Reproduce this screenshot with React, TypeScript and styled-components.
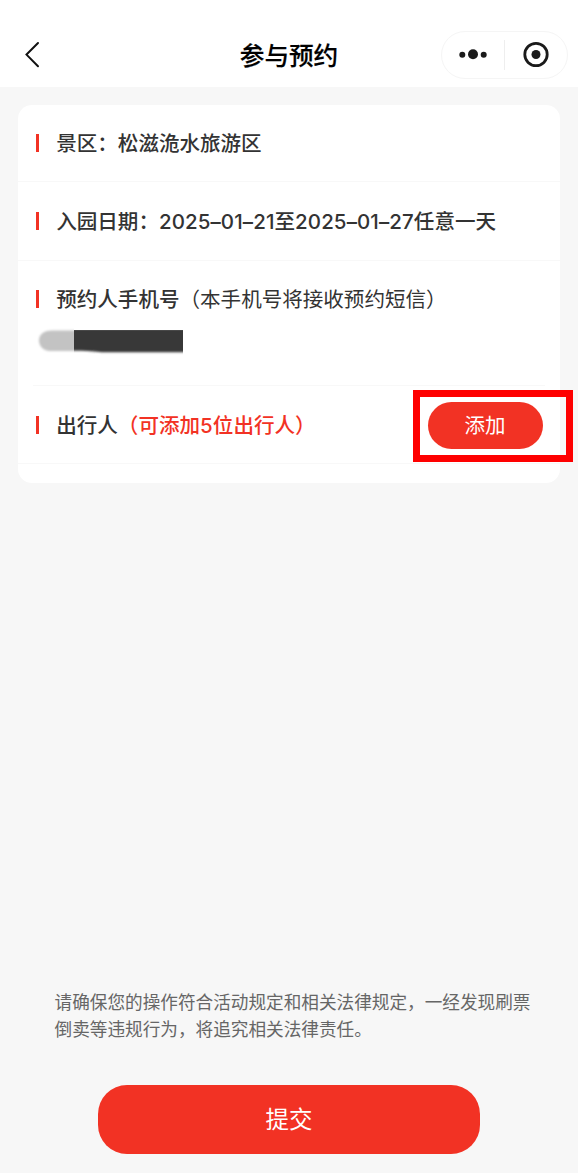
import React from "react";
import styled, { createGlobalStyle } from "styled-components";

const GlobalStyle = createGlobalStyle`
  *, *::before, *::after { box-sizing: border-box; }
  body {
    margin: 0;
    background: #f7f7f7;
    font-family: "Noto Sans CJK SC", sans-serif;
    color: #333;
  }
  button { font-family: inherit; border: 0; padding: 0; margin: 0; cursor: pointer; }
`;

const Page = styled.div`
  display: flex;
  flex-direction: column;
  width: 100%;
  height: 1173px;
  overflow: hidden;
`;

const Header = styled.header`
  display: grid;
  grid-template-columns: 1fr auto 1fr;
  align-items: center;
  height: 87px;
  padding: 22px 10px 0 14px;
  background: #fff;
`;

const BackButton = styled.button`
  display: flex;
  width: 36px;
  height: 36px;
  background: none;
`;

const Title = styled.h1`
  margin: 0 4px 2px 0;
  font-size: 24.6px;
  font-weight: 500;
  line-height: 36px;
  color: #000;
  -webkit-text-stroke: 0.2px #000;
`;

const Capsule = styled.div`
  display: flex;
  align-items: center;
  justify-self: end;
  width: 127px;
  height: 48px;
  border: 1px solid #f5f5f5;
  border-radius: 24px;
`;

const CapsuleButton = styled.button`
  display: flex;
  flex: 1;
  align-items: center;
  justify-content: center;
  height: 100%;
  background: none;
`;

const CapsuleRule = styled.span`
  width: 1px;
  height: 30px;
  background: #eee;
`;

const Card = styled.main`
  display: flex;
  flex-direction: column;
  height: 378px;
  margin: 18px 18px 0;
  border-radius: 14px;
  background: #fff;
`;

const Row = styled.section<{ $height: number; $inset?: boolean }>`
  display: flex;
  flex-direction: column;
  height: ${(p) => p.$height}px;
  padding: 0 17.5px 0 16.5px;
  background: linear-gradient(#f8f8f8, #f8f8f8) bottom center / ${(p) => (p.$inset ? "calc(100% - 30px)" : "100%")} 1px no-repeat;
`;

const RowLine = styled.div<{ $height?: number }>`
  display: flex;
  align-items: center;
  height: ${(p) => p.$height ?? 76}px;
`;

const Marker = styled.span`
  flex: none;
  width: 3.5px;
  height: 18px;
  margin: 0 17.2px 0 1px;
  background: #f23224;
`;

const Label = styled.span<{ $weight?: number; $red?: boolean }>`
  height: 30px;
  margin-top: -2px;
  font-size: 20.55px;
  line-height: 30px;
  font-weight: ${(p) => p.$weight ?? 500};
  color: ${(p) => (p.$red ? "#f23224" : "#333")};
  white-space: pre;
`;

const Digits = styled.span`
  font-family: Inter, "Noto Sans CJK SC", sans-serif;
  font-size: 20.5px;
  font-weight: 450;
  line-height: 1;
  letter-spacing: 0.1px;
`;

const MaskedPhone = styled.svg`
  display: block;
  width: 150px;
  height: 28px;
  margin: -10px 0 0 1.5px;
`;

const AddButton = styled.button`
  position: relative;
  width: 115px;
  height: 47px;
  margin-left: auto;
  border-radius: 24px;
  background: #f23224;
  color: #fff;
  font-size: 20.5px;
  line-height: 45px;
  padding-bottom: 2px;
`;

const Highlight = styled.span`
  position: absolute;
  inset: -12px -30px -13px -15px;
  border: 7px solid #fe0000;
  pointer-events: none;
`;

const Footer = styled.footer`
  display: flex;
  flex-direction: column;
  align-items: center;
  margin-top: auto;
  padding-bottom: 19px;
`;

const Notice = styled.p`
  width: 480px;
  margin: 0 0 43px 11px;
  font-size: 17.64px;
  line-height: 26.5px;
  color: #666;
`;

const SubmitButton = styled.button`
  width: 382px;
  height: 69px;
  padding-bottom: 2px;
  border-radius: 29px;
  background: #f23224;
  color: #fff;
  font-size: 23.5px;
  line-height: 67px;
`;

export default function App() {
  return (
    <>
      <GlobalStyle />
      <Page>
        <Header>
          <BackButton aria-label="返回">
            <svg width="36" height="36" viewBox="0 0 36 36" fill="none">
              <path d="M24 6 12.5 17.6 24 29.2" stroke="#111" strokeWidth="2" strokeLinecap="round" />
            </svg>
          </BackButton>
          <Title>参与预约</Title>
          <Capsule>
            <CapsuleButton aria-label="更多">
              <svg width="30" height="14" viewBox="0 0 30 14" fill="#1a1a1a">
                <circle cx="4.3" cy="6.7" r="3" />
                <circle cx="15" cy="6.3" r="5" />
                <circle cx="25.7" cy="6.7" r="3" />
              </svg>
            </CapsuleButton>
            <CapsuleRule />
            <CapsuleButton aria-label="关闭">
              <svg width="28" height="28" viewBox="0 0 28 28">
                <circle cx="14" cy="13.5" r="11.2" fill="none" stroke="#1a1a1a" strokeWidth="2.8" />
                <circle cx="14" cy="13.5" r="4.5" fill="#1a1a1a" />
              </svg>
            </CapsuleButton>
          </Capsule>
        </Header>

        <Card>
          <Row $height={77}>
            <RowLine>
              <Marker />
              <Label>景区：松滋洈水旅游区</Label>
            </RowLine>
          </Row>
          <Row $height={79}>
            <RowLine $height={78}>
              <Marker />
              <Label>
                入园日期：<Digits>2025–01–21</Digits>至<Digits>2025–01–27</Digits>任意一天
              </Label>
            </RowLine>
          </Row>
          <Row $height={125} $inset>
            <RowLine>
              <Marker />
              <Label>预约人手机号</Label>
              <Label $weight={400}>（本手机号将接收预约短信）</Label>
            </RowLine>
            <MaskedPhone viewBox="0 0 150 28">
              <defs>
                <filter id="soft" x="-10%" y="-20%" width="120%" height="140%">
                  <feGaussianBlur stdDeviation="0.8" />
                </filter>
                <clipPath id="tail">
                  <rect x="0" y="0" width="38" height="28" />
                </clipPath>
                <clipPath id="bar">
                  <rect x="38" y="3" width="109" height="25" />
                </clipPath>
              </defs>
              <g clipPath="url(#tail)">
                <path d="M50 3.5H16C7 3.5 3 8 3 13.5S7 23.5 14 24H50Z" fill="#c3c3c3" filter="url(#soft)" />
              </g>
              <g clipPath="url(#bar)">
                <path d="M30 2H160V25.3H66C58 24.5 52 23.8 30 23.8Z" fill="#393939" filter="url(#soft)" />
              </g>
            </MaskedPhone>
          </Row>
          <Row $height={78}>
            <RowLine $height={79}>
              <Marker />
              <Label>出行人</Label>
              <Label $red>（可添加<Digits>5</Digits>位出行人）</Label>
              <AddButton>
                添加
                <Highlight />
              </AddButton>
            </RowLine>
          </Row>
        </Card>

        <Footer>
          <Notice>请确保您的操作符合活动规定和相关法律规定，一经发现刷票倒卖等违规行为，将追究相关法律责任。</Notice>
          <SubmitButton>提交</SubmitButton>
        </Footer>
      </Page>
    </>
  );
}
